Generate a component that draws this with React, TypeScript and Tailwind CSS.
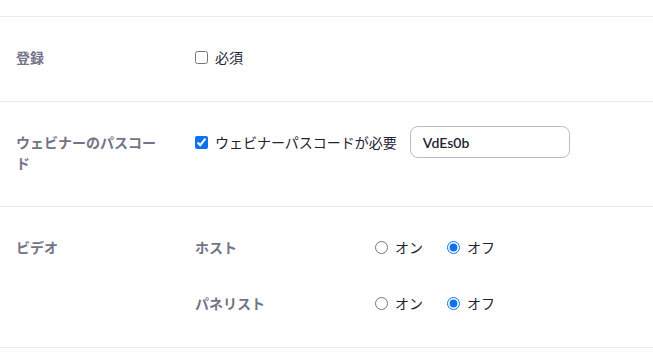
import React from "react";

const font = { fontFamily: '"Lato", "Noto Sans CJK JP", sans-serif' };

function Label({ children }: { children: React.ReactNode }) {
  return (
    <div className="w-[179px] shrink-0 pr-[30px] pt-[6px] text-[14px] font-bold leading-[21px] text-[#747487]">
      {children}
    </div>
  );
}

function RadioPair({ name }: { name: string }) {
  return (
    <div className="flex items-center gap-[24px] text-[14px] text-[#232333]">
      <label className="flex items-center gap-[7px]">
        <input type="radio" name={name} className="m-0 h-[13px] w-[13px] accent-[#0e72ed]" />
        オン
      </label>
      <label className="flex items-center gap-[7px]">
        <input type="radio" name={name} defaultChecked className="m-0 h-[13px] w-[13px] accent-[#0e72ed]" />
        オフ
      </label>
    </div>
  );
}

export default function App() {
  return (
    <div className="w-[653px] h-[355px] bg-white pt-4" style={font}>
      <div className="border-t border-[#ececf0]" />

      {/* 登録 */}
      <div className="flex h-[85px] pt-[24px] pl-4 border-b border-[#ececf0]">
        <Label>登録</Label>
        <div className="flex h-8 items-center">
          <label className="flex items-center gap-[7px] text-[14px] text-[#232333]">
            <input type="checkbox" className="m-0 h-[13px] w-[13px] accent-[#0e72ed]" />
            必須
          </label>
        </div>
      </div>

      {/* passcode */}
      <div className="flex h-[105px] pt-[24px] pl-4 border-b border-[#ececf0]">
        <Label>ウェビナーのパスコード</Label>
        <div className="flex h-8 items-center gap-[13px]">
          <label className="flex items-center gap-[7px] text-[14px] text-[#232333]">
            <input type="checkbox" defaultChecked className="m-0 h-[13px] w-[13px] accent-[#0e72ed]" />
            ウェビナーパスコードが必要
          </label>
          <input
            defaultValue="VdEs0b"
            className="h-[32px] w-[160px] rounded-lg border border-[#babacc] px-3 text-[14px] font-semibold text-[#232333] outline-none"
          />
        </div>
      </div>

      {/* video */}
      <div className="flex h-[141px] pt-[24px] pl-4 border-b border-[#ececf0]">
        <Label>ビデオ</Label>
        <div className="flex flex-col gap-[24px]">
          <div className="flex h-8 items-center">
            <div className="w-[180px] text-[14px] font-bold text-[#747487]">ホスト</div>
            <RadioPair name="host" />
          </div>
          <div className="flex h-8 items-center">
            <div className="w-[180px] text-[14px] font-bold text-[#747487]">パネリスト</div>
            <RadioPair name="panelist" />
          </div>
        </div>
      </div>
    </div>
  );
}
